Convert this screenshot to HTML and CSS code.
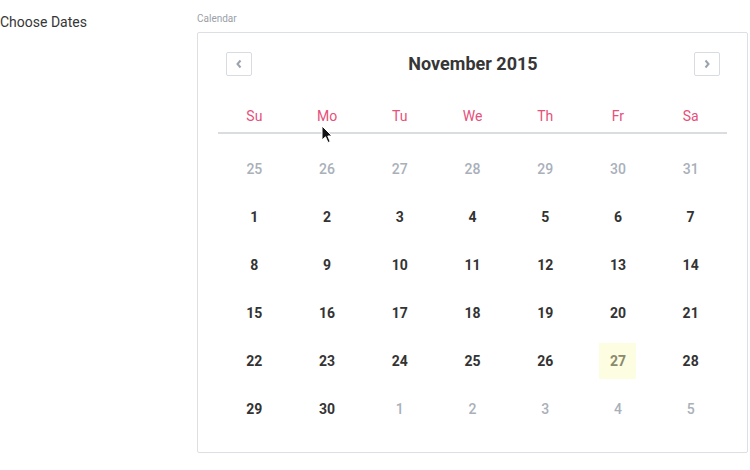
FILE: index.html
```html
<!DOCTYPE html>
<html lang="en">

<head>
    <meta charset="UTF-8">
    <meta name="viewport" content="width=device-width, initial-scale=1.0">
    <title>Choose Dates</title>
    <link rel="stylesheet" href="styles.css">
</head>

<body>
    <div class="field">
        <div class="field-label">Choose Dates</div>
        <div class="field-body">
            <div class="small-label">Calendar</div>
            <div class="calendar">
                <div class="cal-head">
                    <button class="nav-btn">
                        <svg width="8" height="10" viewBox="0 0 8 10"><path d="M5.5 1.5 L2.5 5 L5.5 8.5" fill="none" stroke="#9aa3ae" stroke-width="2"/></svg>
                    </button>
                    <div class="cal-title">November 2015</div>
                    <button class="nav-btn">
                        <svg width="8" height="10" viewBox="0 0 8 10"><path d="M2.5 1.5 L5.5 5 L2.5 8.5" fill="none" stroke="#9aa3ae" stroke-width="2"/></svg>
                    </button>
                </div>

                <div class="weekdays">
                    <span>Su</span><span>Mo</span><span>Tu</span><span>We</span><span>Th</span><span>Fr</span><span>Sa</span>
                </div>

                <div class="days">
                    <span class="muted">25</span><span class="muted">26</span><span class="muted">27</span><span class="muted">28</span><span class="muted">29</span><span class="muted">30</span><span class="muted">31</span>
                    <span>1</span><span>2</span><span>3</span><span>4</span><span>5</span><span>6</span><span>7</span>
                    <span>8</span><span>9</span><span>10</span><span>11</span><span>12</span><span>13</span><span>14</span>
                    <span>15</span><span>16</span><span>17</span><span>18</span><span>19</span><span>20</span><span>21</span>
                    <span>22</span><span>23</span><span>24</span><span>25</span><span>26</span><span class="today">27</span><span>28</span>
                    <span>29</span><span>30</span><span class="muted">1</span><span class="muted">2</span><span class="muted">3</span><span class="muted">4</span><span class="muted">5</span>
                </div>
            </div>
        </div>
    </div>

    <svg class="cursor" width="12" height="19" viewBox="0 0 12 19">
        <path d="M1 1 L1 15 L4.5 11.8 L7 17.5 L9.2 16.6 L6.8 11 L11 11 Z" fill="#111" stroke="#fff" stroke-width="1"/>
    </svg>
</body>

</html>
```

FILE: styles.css
```css
body {
    margin: 0;
    font-family: Roboto, "Liberation Sans", sans-serif;
    color: #333;
    background: #fff;
}

.field {
    display: flex;
}

.field-label {
    width: 197px;
    font-size: 14px;
    line-height: 16px;
    padding-top: 14px;
    color: #363636;
}

.field-body {
    width: 551px;
}

.small-label {
    font-size: 10px;
    line-height: 12px;
    padding-top: 13px;
    height: 32px;
    box-sizing: border-box;
    color: #9aa0a8;
}

.calendar {
    border: 1px solid #dcdfe3;
    border-radius: 2px;
    padding: 19px 20px 19px 20px;
}

.cal-head {
    display: flex;
    align-items: center;
    justify-content: space-between;
    padding: 0 7px 0 8px;
}

.nav-btn {
    width: 26px;
    height: 24px;
    border: 1px solid #d8dce1;
    border-radius: 2px;
    background: #fff;
    padding: 0;
    display: flex;
    align-items: center;
    justify-content: center;
}

.cal-title {
    font-size: 18px;
    font-weight: 700;
    color: #363636;
    margin-bottom: 2px;
}

.weekdays {
    margin-top: 24px;
    display: grid;
    grid-template-columns: repeat(7, 1fr);
    border-bottom: 2px solid #d9dce0;
}

.weekdays span {
    text-align: center;
    height: 32px;
    line-height: 32px;
    font-size: 14px;
    color: #e6507a;
}

.days {
    margin-top: 11px;
    display: grid;
    grid-template-columns: repeat(7, 1fr);
    grid-auto-rows: 48px;
}

.days span {
    justify-self: center;
    align-self: center;
    width: 37px;
    height: 36px;
    line-height: 36px;
    text-align: center;
    font-size: 14px;
    font-weight: 700;
    color: #333;
}

.days span.muted {
    font-weight: 500;
    color: #a9b0ba;
}

.days span.today {
    background: #fdfde2;
    color: #8a8a6c;
}

.cursor {
    position: absolute;
    left: 321px;
    top: 125px;
}
```
